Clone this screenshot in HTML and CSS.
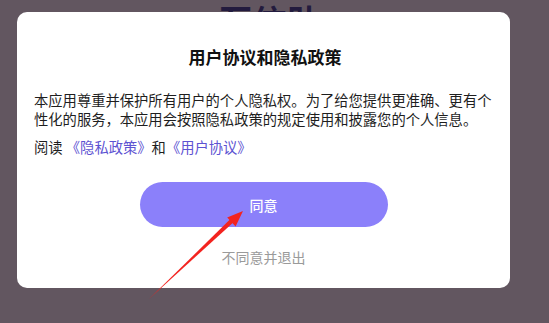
FILE: index.html
```html
<!DOCTYPE html>
<html lang="zh-CN">
<head>
<meta charset="utf-8">
<title>用户协议和隐私政策</title>
<link rel="stylesheet" href="styles.css">
</head>
<body>
<div class="page">
  <h1 class="bg-title">互信助</h1>
</div>
<div class="overlay">
  <div class="modal">
    <h2 class="modal-title">用户协议和隐私政策</h2>
    <p class="modal-text">本应用尊重并保护所有用户的个人隐私权。为了给您提供更准确、更有个性化的服务，本应用会按照隐私政策的规定使用和披露您的个人信息。</p>
    <p class="modal-links">阅读 <a class="link">《隐私政策》</a>和<a class="link">《用户协议》</a></p>
    <div class="actions">
      <button class="btn-agree">同意</button>
      <button class="btn-decline">不同意并退出</button>
    </div>
  </div>
</div>
<svg class="arrow" width="549" height="323" viewBox="0 0 549 323">
  <polygon points="149,299 234.6,221.3 231.4,218.1" fill="#f3231f"/>
  <polygon points="243,211 227.2,217.5 235.6,226.5" fill="#f3231f"/>
</svg>
</body>
</html>
```
FILE: styles.css
```css
html, body {
  margin: 0;
  padding: 0;
}
body {
  width: 549px;
  height: 323px;
  overflow: hidden;
  background: #625660;
  font-family: "Noto Sans CJK SC", "Noto Sans", sans-serif;
  position: relative;
}
.page {
  display: flex;
  justify-content: center;
  padding-top: 1px;
}
.bg-title {
  margin: 0 0 0 -10px;
  font-size: 34px;
  line-height: 40px;
  font-weight: 700;
  color: #231b3e;
}
.overlay {
  position: absolute;
  left: 17px;
  top: 12px;
}
.modal {
  width: 493px;
  height: 276px;
  box-sizing: border-box;
  background: #ffffff;
  border-radius: 10px;
  padding: 33px 14px 0 17px;
  display: flex;
  flex-direction: column;
}
.modal-title {
  margin: 0;
  text-align: center;
  font-size: 17px;
  line-height: 24px;
  font-weight: 700;
  color: #111111;
}
.modal-text {
  margin: 21px 0 0 0;
  font-size: 14.3px;
  line-height: 19px;
  color: #1e1e1e;
}
.modal-links {
  margin: 9px 0 0 0;
  font-size: 14.3px;
  line-height: 19px;
  color: #1e1e1e;
}
.link {
  color: #5d53d2;
}
.actions {
  display: flex;
  flex-direction: column;
  align-items: center;
  margin-top: 26px;
  padding-right: 3px;
}
.btn-agree {
  width: 248px;
  height: 45px;
  border: none;
  border-radius: 23px;
  background: #8b80fa;
  color: #ffffff;
  font-family: inherit;
  font-size: 14px;
  font-weight: 500;
  padding: 0;
}
.btn-decline {
  margin-top: 20px;
  border: none;
  background: none;
  color: #9a9a9a;
  font-family: inherit;
  font-size: 14px;
  line-height: 20px;
  padding: 0;
}
.arrow {
  position: absolute;
  left: 0;
  top: 0;
  pointer-events: none;
}
```
